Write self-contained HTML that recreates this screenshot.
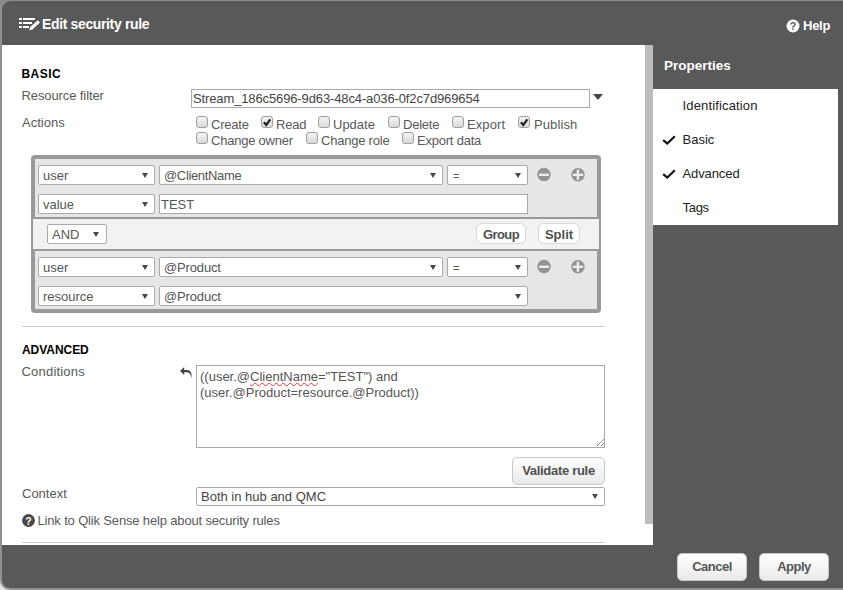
<!DOCTYPE html>
<html><head><meta charset="utf-8">
<style>
*{box-sizing:border-box;margin:0;padding:0}
html,body{width:843px;height:590px;overflow:hidden;background:#e4e4e4;font-family:"Liberation Sans",sans-serif;font-size:13px;color:#595959}
.abs{position:absolute}
#dlg{position:absolute;left:0;top:0;width:851px;height:590px;background:#595959;border:2px solid #909090;border-top:1px solid #8c8c8c;border-radius:10px 6px 6px 10px}
#tl{position:absolute;left:0;top:0;width:12px;height:12px;background:#8a8a8a}
#white{position:absolute;left:2px;top:45px;width:651px;height:500px;background:#fff}
#thumb{position:absolute;left:645px;top:45px;width:8px;height:479px;background:#bdbdbd}
.lbl{position:absolute;white-space:nowrap;line-height:15px;color:#595959}
.cl{letter-spacing:-0.22px}
.hd{color:#000;font-weight:bold}
.w{color:#fff;font-weight:bold}
.cb{position:absolute;width:12px;height:12px;border:1px solid #9f9f9f;border-radius:3px;background:linear-gradient(#f3f3f3,#dadada)}
.sel{position:absolute;height:20px;border:1px solid #aaa;border-radius:2px;background:#fff;color:#555;font-size:13px;line-height:18px;padding:1px 0 0 4px;white-space:nowrap;overflow:visible}
.inp{position:absolute;border:1px solid #aaa;background:#fff;color:#444;font-size:13px;white-space:nowrap}
.arr{position:absolute;width:0;height:0;border-left:3px solid transparent;border-right:3px solid transparent;border-top:5.5px solid #484848;margin:0.5px 0 0 -0.7px}
.btn{position:absolute;border:1px solid #c8c8c8;border-radius:5px;background:linear-gradient(#fefefe,#e9e9e9);color:#444;font-weight:bold;font-size:13px;text-align:center;white-space:nowrap}
.grp{position:absolute;left:33px;width:566px;border:2px solid #999;background:#e6e6e6}
.circ{position:absolute;width:13px;height:13px;border-radius:50%;background:#999}
.hr{position:absolute;left:22px;width:583px;height:1px;background:#ccc}
</style></head><body>
<div id="tl"></div>
<div id="dlg"></div>
<div id="white"></div>
<div id="thumb"></div>

<!-- header -->
<svg class="abs" style="left:19px;top:17px" width="22" height="14" viewBox="0 0 22 14"><g fill="#fff"><rect x="0" y="1" width="3" height="2"/><rect x="4" y="1" width="12" height="2"/><rect x="0" y="5" width="3" height="2"/><rect x="4" y="5" width="9" height="2"/><rect x="0" y="9" width="3" height="2"/><rect x="4" y="9" width="6" height="2"/><path d="M18.8 3.2 L21 5.6 L13.4 12.4 L10.2 13.2 L11.3 10 Z"/></g></svg>
<div class="lbl w" style="left:42px;top:16px;font-size:14px;line-height:16px;letter-spacing:-0.36px">Edit security rule</div>
<svg class="abs" style="left:785.5px;top:19px" width="14" height="14" viewBox="0 0 14 14"><circle cx="7" cy="7" r="6.5" fill="#fff"/><text x="7" y="11" font-family="Liberation Sans" font-weight="bold" font-size="10.5" text-anchor="middle" fill="#595959">?</text></svg>
<div class="lbl w" style="left:803px;top:18px;font-size:13px;letter-spacing:-0.25px">Help</div>

<!-- BASIC -->
<div class="lbl hd" style="left:21.5px;top:67px;font-size:12px;letter-spacing:0.45px">BASIC</div>
<div class="lbl" style="left:21.5px;top:88px;letter-spacing:-0.1px">Resource filter</div>
<div class="inp" style="left:191px;top:89px;width:399px;height:19px;padding-left:1px;line-height:17px;color:#444;letter-spacing:-0.125px">Stream_186c5696-9d63-48c4-a036-0f2c7d969654</div>
<div class="abs" style="left:593px;top:94px;width:0;height:0;border-left:5px solid transparent;border-right:5px solid transparent;border-top:6px solid #444"></div>
<div class="lbl" style="left:22px;top:115px">Actions</div>

<div class="cb" style="left:196px;top:116px"></div><div class="lbl cl" style="left:211px;top:117px">Create</div>
<div class="cb ck" style="left:261px;top:116px"></div><div class="lbl cl" style="left:276px;top:117px">Read</div>
<div class="cb" style="left:318px;top:116px"></div><div class="lbl cl" style="left:333px;top:117px;letter-spacing:0">Update</div>
<div class="cb" style="left:388px;top:116px"></div><div class="lbl cl" style="left:403px;top:117px">Delete</div>
<div class="cb" style="left:452px;top:116px"></div><div class="lbl cl" style="left:467px;top:117px;letter-spacing:0.1px">Export</div>
<div class="cb ck" style="left:518px;top:116px"></div><div class="lbl cl" style="left:534px;top:117px;letter-spacing:0.1px">Publish</div>
<div class="cb" style="left:196px;top:132px"></div><div class="lbl cl" style="left:211px;top:133px">Change owner</div>
<div class="cb" style="left:306px;top:132px"></div><div class="lbl cl" style="left:321px;top:133px">Change role</div>
<div class="cb" style="left:402px;top:132px"></div><div class="lbl cl" style="left:417px;top:133px">Export data</div>
<svg class="abs" style="left:262px;top:115px" width="13" height="13" viewBox="0 0 13 13"><path d="M1.9 7.3 L4.3 10 L8.3 4.4" fill="none" stroke="#222" stroke-width="2.2"/></svg>
<svg class="abs" style="left:519px;top:115px" width="13" height="13" viewBox="0 0 13 13"><path d="M1.9 7.3 L4.3 10 L8.3 4.4" fill="none" stroke="#222" stroke-width="2.2"/></svg>

<!-- rules box -->
<div class="abs" style="left:31px;top:155px;width:570px;height:158px;border:2px solid #999;border-radius:4px;background:#f2f2f2"></div>
<div class="grp" style="top:157px;height:62px"></div>
<div class="grp" style="top:249px;height:62px"></div>

<div class="sel" style="left:38px;top:165px;width:117px">user</div><div class="arr" style="left:143px;top:172px"></div>
<div class="sel" style="left:159px;top:165px;width:284px;letter-spacing:-0.35px">@ClientName</div><div class="arr" style="left:431px;top:172px"></div>
<div class="sel" style="left:447px;top:165px;width:81px;font-size:11px;padding-left:5px">=</div><div class="arr" style="left:516px;top:172px"></div>
<svg class="abs" style="left:537px;top:167px" width="15" height="15" viewBox="0 0 15 15"><circle cx="7" cy="7.5" r="6.7" fill="#939393"/><rect x="2" y="6.6" width="10" height="2.4" fill="#ededed"/></svg>
<svg class="abs" style="left:571px;top:167px" width="15" height="15" viewBox="0 0 15 15"><circle cx="7" cy="7.8" r="6.7" fill="#939393"/><rect x="1.8" y="6.6" width="10.3" height="2.4" fill="#ededed"/><rect x="5.7" y="2.7" width="2.4" height="10.2" fill="#ededed"/></svg>

<div class="sel" style="left:38px;top:194px;width:117px">value</div><div class="arr" style="left:143px;top:201px"></div>
<div class="inp" style="left:159px;top:194px;width:369px;height:20px;padding:1px 0 0 1px;line-height:18px;color:#555">TEST</div>

<div class="sel" style="left:47px;top:224px;width:60px">AND</div><div class="arr" style="left:94px;top:231px"></div>
<div class="btn" style="left:476px;top:223px;width:50px;height:21px;line-height:21px;background:#fff;border-color:#d8d8d8;border-radius:6px;color:#505050;letter-spacing:-0.6px">Group</div>
<div class="btn" style="left:538px;top:223px;width:42px;height:21px;line-height:21px;background:#fff;border-color:#d8d8d8;border-radius:6px;color:#505050">Split</div>

<div class="sel" style="left:38px;top:257px;width:117px">user</div><div class="arr" style="left:143px;top:264px"></div>
<div class="sel" style="left:159px;top:257px;width:284px;letter-spacing:-0.15px">@Product</div><div class="arr" style="left:431px;top:264px"></div>
<div class="sel" style="left:447px;top:257px;width:81px;font-size:11px;padding-left:5px">=</div><div class="arr" style="left:516px;top:264px"></div>
<svg class="abs" style="left:537px;top:259px" width="15" height="15" viewBox="0 0 15 15"><circle cx="7" cy="7.5" r="6.7" fill="#939393"/><rect x="2" y="6.6" width="10" height="2.4" fill="#ededed"/></svg>
<svg class="abs" style="left:571px;top:259px" width="15" height="15" viewBox="0 0 15 15"><circle cx="7" cy="7.8" r="6.7" fill="#939393"/><rect x="1.8" y="6.6" width="10.3" height="2.4" fill="#ededed"/><rect x="5.7" y="2.7" width="2.4" height="10.2" fill="#ededed"/></svg>

<div class="sel" style="left:38px;top:286px;width:117px">resource</div><div class="arr" style="left:143px;top:293px"></div>
<div class="sel" style="left:159px;top:286px;width:369px;letter-spacing:-0.15px">@Product</div><div class="arr" style="left:516px;top:293px"></div>

<div class="hr" style="top:326px"></div>

<!-- ADVANCED -->
<div class="lbl hd" style="left:22px;top:343px;font-size:12px;letter-spacing:-0.05px">ADVANCED</div>
<div class="lbl" style="left:21.5px;top:364px;letter-spacing:0.2px">Conditions</div>
<svg class="abs" style="left:180px;top:366px" width="13" height="13" viewBox="0 0 13 13"><path d="M0 5.1 L4.2 1.1 L4.2 4 L7.5 4 C10.6 4.2 12.2 7.3 11.4 12.2 C11 8.9 9.8 6.6 7.2 6.3 L4.2 6.3 L4.2 9 Z" fill="#444"/></svg>
<div class="inp" style="left:196px;top:365px;width:409px;height:83px;padding:3px 0 0 3px;line-height:16px;color:#555;white-space:pre">((user.@<span style="text-decoration:underline wavy #e33;text-decoration-thickness:1px;text-underline-offset:1px;text-decoration-skip-ink:none">ClientName</span>="TEST") and
(user.@Product=resource.@Product))</div>
<svg class="abs" style="left:594px;top:437px" width="10" height="10" viewBox="0 0 10 10"><path d="M3 9 L10 2 M7 9 L10 6" stroke="#555" stroke-width="1" stroke-dasharray="1.2 0.4" fill="none"/></svg>
<div class="btn" style="left:512px;top:457px;width:93px;height:28px;line-height:26px;letter-spacing:-0.3px;color:#505050">Validate rule</div>
<div class="lbl" style="left:22px;top:486px">Context</div>
<div class="inp" style="left:196px;top:487px;width:409px;height:19px;padding-left:4px;line-height:17px;border-radius:2px;color:#444">Both in hub and QMC</div><div class="arr" style="left:593px;top:493px"></div>
<svg class="abs" style="left:21.7px;top:514.3px" width="13" height="13" viewBox="0 0 13 13"><circle cx="6.5" cy="6.5" r="6.4" fill="#484848"/><text x="6.5" y="10.5" font-family="Liberation Sans" font-weight="bold" font-size="10.5" text-anchor="middle" fill="#fff">?</text></svg>
<div class="lbl" style="left:37.5px;top:513px;letter-spacing:-0.16px">Link to Qlik Sense help about security rules</div>
<div class="hr" style="top:542px"></div>

<!-- properties -->
<div class="lbl w" style="left:664px;top:58px;font-size:13.5px;line-height:16px;letter-spacing:0">Properties</div>
<div class="abs" style="left:653px;top:89px;width:185px;height:136px;background:#fff"></div>
<div class="lbl" style="left:682.5px;top:98px;color:#222;letter-spacing:0.15px">Identification</div>
<div class="lbl" style="left:682.5px;top:132px;color:#222">Basic</div>
<div class="lbl" style="left:682.5px;top:166px;color:#222;letter-spacing:-0.1px">Advanced</div>
<div class="lbl" style="left:682.5px;top:200px;color:#222;letter-spacing:-0.3px">Tags</div>
<svg class="abs" style="left:662px;top:135px" width="15" height="11" viewBox="0 0 15 11"><path d="M1.2 5.2 L5.3 8.6 L12.8 1.2" fill="none" stroke="#111" stroke-width="2.2"/></svg>
<svg class="abs" style="left:662px;top:169px" width="15" height="11" viewBox="0 0 15 11"><path d="M1.2 5.2 L5.3 8.6 L12.8 1.2" fill="none" stroke="#111" stroke-width="2.2"/></svg>

<!-- footer buttons -->
<div class="btn" style="left:677px;top:553px;width:70px;height:28px;line-height:26px;letter-spacing:-0.5px;color:#555">Cancel</div>
<div class="btn" style="left:759px;top:553px;width:70px;height:28px;line-height:26px;letter-spacing:-0.5px;color:#555">Apply</div>
</body></html>
